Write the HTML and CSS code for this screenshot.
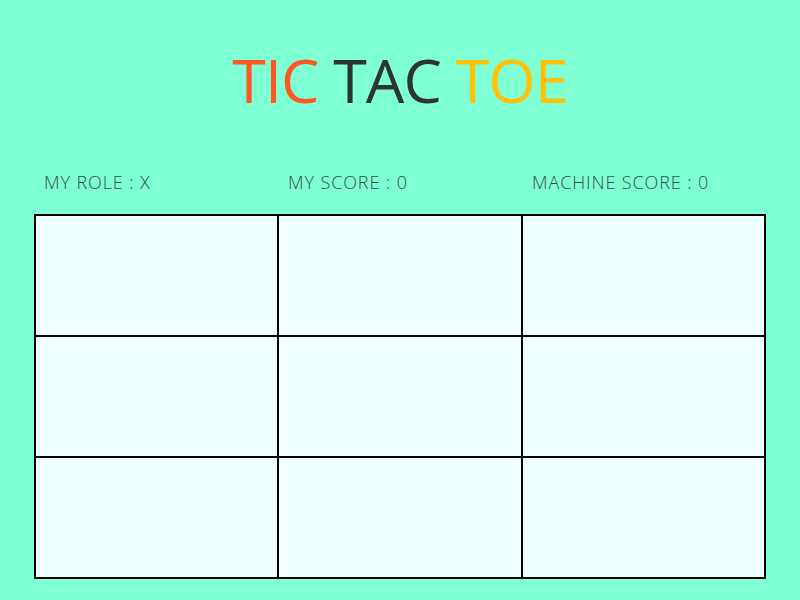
FILE: index.html
```html
<!DOCTYPE html>
<html lang="en">
<head>
<meta charset="utf-8">
<title>Tic Tac Toe</title>
<link rel="stylesheet" href="styles.css">
</head>
<body>
  <h1 class="title"><span class="tic">TIC</span> <span class="tac">TAC</span> <span class="toe">TOE</span></h1>
  <div class="stats">
    <div class="stat">MY ROLE : X</div>
    <div class="stat">MY SCORE : 0</div>
    <div class="stat">MACHINE SCORE : 0</div>
  </div>
  <div class="board">
    <div class="cell"></div><div class="cell"></div><div class="cell"></div>
    <div class="cell"></div><div class="cell"></div><div class="cell"></div>
    <div class="cell"></div><div class="cell"></div><div class="cell"></div>
  </div>
</body>
</html>
```
FILE: styles.css
```css
html, body {
  margin: 0;
  padding: 0;
}
body {
  background: #7fffd4;
  font-family: "Open Sans", "Lato", sans-serif;
  width: 800px;
  height: 600px;
  overflow: hidden;
}
.title {
  margin: 0;
  padding-top: 40px;
  height: 80px;
  text-align: center;
  font-size: 61px;
  font-weight: 400;
  line-height: 80px;
  letter-spacing: -1px;
}
.tic { color: #ff5722; }
.tac { color: #2d3436; }
.toe { color: #ffc107; }
.stats {
  margin: 50px 34px 0;
  display: grid;
  grid-template-columns: repeat(3, 1fr);
  height: 44px;
  align-items: start;
}
.stat {
  padding-left: 10px;
  font-size: 18px;
  font-weight: 300;
  letter-spacing: 0.9px;
  color: #2f4f4f;
  line-height: 24px;
}
.board {
  margin: 0 34px;
  display: grid;
  grid-template-columns: repeat(3, 1fr);
  grid-template-rows: repeat(3, 121px);
  border: 1px solid #000;
}
.cell {
  border: 1px solid #000;
  background: #f0ffff;
}
```
